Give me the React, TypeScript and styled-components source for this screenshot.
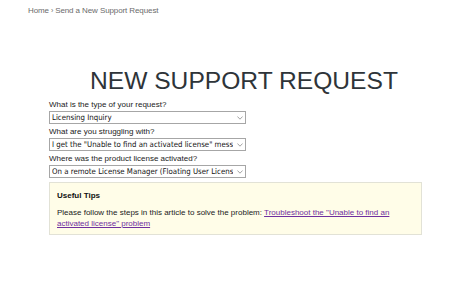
import React from "react";
import styled, { createGlobalStyle } from "styled-components";

const Global = createGlobalStyle`
  html, body { margin: 0; padding: 0; background: #ffffff; }
  body { font-family: "Liberation Sans", Arial, sans-serif; }
`;

const Page = styled.div`
  width: 450px;
  height: 291px;
  background: #fff;
  overflow: hidden;
`;

const Breadcrumb = styled.nav`
  padding: 6px 0 0 28px;
  font-size: 8px;
  line-height: 10px;
  color: #6b6b6b;
  letter-spacing: -0.1px;
`;

const Crumb = styled.a`
  color: #6b6b6b;
  text-decoration: none;
`;

const Sep = styled.span`
  margin: 0 2px;
  font-size: 7px;
`;

const Main = styled.main`
  margin: 52px 0 0 49px;
  width: 373px;
`;

const Title = styled.h1`
  margin: 0;
  padding-left: 41px;
  font-size: 24.6px;
  line-height: 25px;
  font-weight: normal;
  color: #2e3439;
  white-space: nowrap;
`;

const Form = styled.form`
  margin-top: 7px;
  display: flex;
  flex-direction: column;
  gap: 3px;
`;

const Field = styled.div`
  display: flex;
  flex-direction: column;
  gap: 1px;
`;

const Label = styled.label`
  display: block;
  font-size: 8px;
  line-height: 10px;
  color: #222;
`;

const SelectWrap = styled.div`
  position: relative;
  width: 197px;
  height: 13px;
`;

const Select = styled.select`
  display: block;
  appearance: none;
  -webkit-appearance: none;
  box-sizing: border-box;
  width: 197px;
  height: 13px;
  margin: 0;
  padding: 0 12px 0 2px;
  border: 1px solid #a6a6a6;
  border-radius: 0;
  background: #fff;
  font-family: "DejaVu Sans Condensed", "DejaVu Sans", sans-serif;
  font-size: 7.8px;
  line-height: 11px;
  color: #111;
  outline: none;
`;

const Chevron = styled.svg`
  position: absolute;
  right: 3px;
  top: 5px;
  width: 6px;
  height: 4px;
  pointer-events: none;
`;

const Tips = styled.section`
  box-sizing: border-box;
  margin-top: 1px;
  width: 373px;
  padding: 8px 8px 5px 7px;
  background: #fffde8;
  border: 1px solid #e2e2d6;
`;

const TipsTitle = styled.h3`
  margin: 0;
  font-size: 8px;
  line-height: 10px;
  font-weight: bold;
  color: #111;
`;

const TipsText = styled.p`
  margin: 6px 0 0;
  font-size: 8px;
  line-height: 11px;
  color: #222;
`;

const TipLink = styled.a`
  color: #6f2f9f;
  text-decoration: underline;
`;

const DropdownField: React.FC<{ label: string; value: string }> = ({ label, value }) => (
  <Field>
    <Label>{label}</Label>
    <SelectWrap>
      <Select defaultValue={value}>
        <option value={value}>{value}</option>
      </Select>
      <Chevron viewBox="0 0 6 4">
        <path d="M0.4 0.5 L3 3.2 L5.6 0.5" fill="none" stroke="#8a8a8a" strokeWidth="0.8" />
      </Chevron>
    </SelectWrap>
  </Field>
);

export default function App() {
  return (
    <Page>
      <Global />
      <Breadcrumb>
        <Crumb href="#">Home</Crumb>
        <Sep>›</Sep>
        Send a New Support Request
      </Breadcrumb>
      <Main>
        <Title>NEW SUPPORT REQUEST</Title>
        <Form>
          <DropdownField label="What is the type of your request?" value="Licensing Inquiry" />
          <DropdownField
            label="What are you struggling with?"
            value={'I get the "Unable to find an activated license" message'}
          />
          <DropdownField
            label="Where was the product license activated?"
            value="On a remote License Manager (Floating User License)"
          />
          <Tips>
            <TipsTitle>Useful Tips</TipsTitle>
            <TipsText>
              Please follow the steps in this article to solve the problem:{" "}
              <TipLink href="#">Troubleshoot the "Unable to find an activated license" problem</TipLink>
            </TipsText>
          </Tips>
        </Form>
      </Main>
    </Page>
  );
}
